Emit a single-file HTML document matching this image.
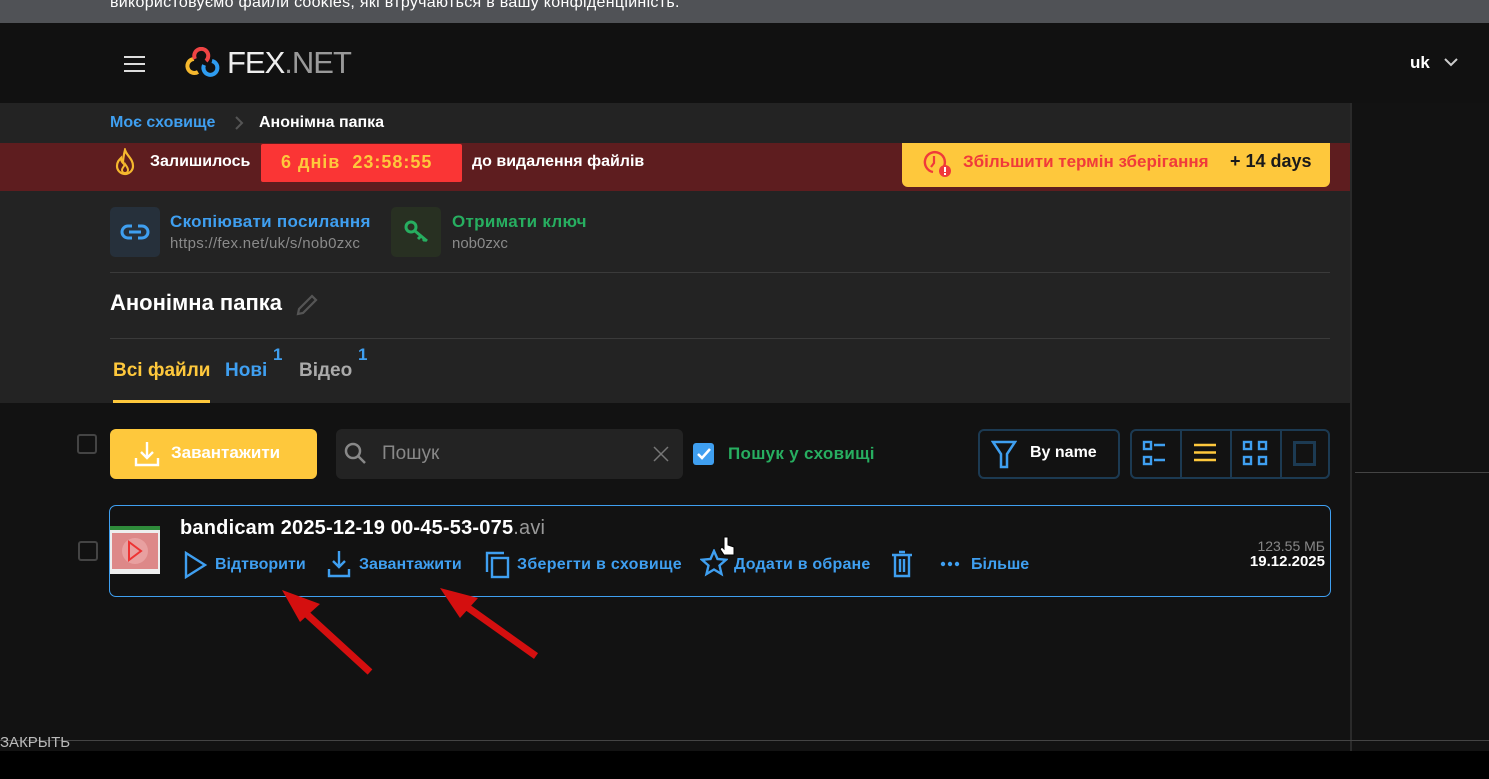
<!DOCTYPE html>
<html><head><meta charset="utf-8"><style>
*{margin:0;padding:0;box-sizing:border-box}
body{width:1489px;height:779px;overflow:hidden;background:#121212;font-family:"Liberation Sans","Noto Sans CJK SC",sans-serif;position:relative;color:#fff}
.a{position:absolute}
.b{font-weight:bold}
</style></head><body>
<div class="a" style="left:0;top:0;width:1489px;height:23px;background:#505256"></div>
<div class="a" style="left:110px;top:-6px;font-size:16px;color:#fff;white-space:nowrap;letter-spacing:0.3px">використовуємо файли cookies, які втручаються в вашу конфіденційність.</div>
<div class="a" style="left:0;top:23px;width:1489px;height:80px;background:#111"></div>
<div class="a" style="left:124px;top:56px;width:21px;height:2px;background:#ddd"></div>
<div class="a" style="left:124px;top:63px;width:21px;height:2px;background:#ddd"></div>
<div class="a" style="left:124px;top:70px;width:21px;height:2px;background:#ddd"></div>
<svg class="a" style="left:184px;top:47px" width="40" height="32" viewBox="0 0 40 32">
<path d="M10 12 A7 7 0 1 0 14 25" stroke="#f5b82e" stroke-width="4" fill="none"/>
<path d="M11 12 A7 7 0 1 1 22 14" stroke="#ef4444" stroke-width="4" fill="none"/>
<path d="M20 18 A7 7 0 1 0 28 14" stroke="#2e9cf0" stroke-width="4" fill="none"/>
</svg>
<div class="a" style="left:227px;top:45px;font-size:31px;color:#eee;letter-spacing:-1px">FEX<span style="color:#999">.NET</span></div>
<div class="a b" style="left:1410px;top:53px;font-size:17px">uk</div>
<svg class="a" style="left:1443px;top:56px" width="16" height="12"><path d="M2 3l6 6 6-6" stroke="#ccc" stroke-width="2" fill="none"/></svg>

<div class="a" style="left:0;top:103px;width:1350px;height:300px;background:#232323"></div>
<div class="a" style="left:1350px;top:103px;width:2px;height:676px;background:#2a2a2a"></div>
<div class="a" style="left:1352px;top:103px;width:137px;height:637px;background:#121212"></div>
<div class="a" style="left:1355px;top:472px;width:134px;height:1px;background:#444"></div>
<div class="a b" style="left:110px;top:114px;font-size:16px;color:#3f9ff0">Моє сховище</div>
<svg class="a" style="left:233px;top:115px" width="12" height="16"><path d="M3 2l6 6-6 6" stroke="#555" stroke-width="2" fill="none"/></svg>
<div class="a b" style="left:259px;top:114px;font-size:16px">Анонімна папка</div>

<div class="a" style="left:0;top:143px;width:1350px;height:48px;background:#5e1d1f"></div>
<svg class="a" style="left:114px;top:148px" width="22" height="30" viewBox="0 0 22 30"><path d="M11 2c2 6 8 9 8 16a8 8 0 0 1-16 0c0-4 2-6 4-8 0 3 1 4 2 5 0-5 1-9 2-13z" stroke="#f5b82e" stroke-width="2.2" fill="none"/><path d="M11 16c2 3 3 4 3 6a3 3 0 0 1-6 0c0-2 2-3 3-6z" stroke="#f5b82e" stroke-width="2" fill="none"/></svg>
<div class="a b" style="left:150px;top:153px;font-size:16px">Залишилось</div>
<div class="a b" style="left:261px;top:144px;width:201px;height:38px;background:#fa3535;border-radius:2px;color:#fec83c;font-size:18px;line-height:36px;padding-left:20px;white-space:pre;letter-spacing:1px">6 днів  23:58:55</div>
<div class="a b" style="left:472px;top:153px;font-size:16px">до видалення файлів</div>
<div class="a" style="left:902px;top:143px;width:428px;height:44px;background:#fec83c;border-radius:0 0 6px 6px"></div>
<svg class="a" style="left:921px;top:148px" width="34" height="32" viewBox="0 0 34 32"><path d="M22 20A10 10 0 1 0 12 24" stroke="#f03a3a" stroke-width="2.4" fill="none"/><path d="M13 8v7l-3 4" stroke="#f03a3a" stroke-width="2.2" fill="none"/><circle cx="24" cy="23" r="6" fill="#f03a3a"/><rect x="23" y="19" width="2" height="5" fill="#fff"/><rect x="23" y="25" width="2" height="2" fill="#fff"/></svg>
<div class="a b" style="left:963px;top:152px;font-size:17px;color:#f03a3a">Збільшити термін зберігання</div>
<div class="a b" style="left:1230px;top:151px;font-size:18px;color:#1a1a1a">+ 14 days</div>

<div class="a" style="left:110px;top:207px;width:50px;height:50px;background:#26303b;border-radius:5px"></div>
<svg class="a" style="left:120px;top:220px" width="30" height="24" viewBox="0 0 30 24"><path d="M12 6H8a6 6 0 0 0 0 12h4M18 6h4a6 6 0 0 1 0 12h-4M9 12h12" stroke="#3f9ff0" stroke-width="3" fill="none"/></svg>
<div class="a b" style="left:170px;top:212px;font-size:17px;color:#3f9ff0;letter-spacing:0.3px">Скопіювати посилання</div>
<div class="a" style="left:170px;top:235px;font-size:15px;color:#8a8a8a;letter-spacing:0.3px">https://fex.net/uk/s/nob0zxc</div>
<div class="a" style="left:391px;top:207px;width:50px;height:50px;background:#283022;border-radius:5px"></div>
<svg class="a" style="left:402px;top:218px" width="30" height="28" viewBox="0 0 30 28"><circle cx="9" cy="9" r="5" stroke="#27ae60" stroke-width="3" fill="none"/><path d="M13 13l12 10M19 18l-3 3M23 21l-2 2" stroke="#27ae60" stroke-width="3" fill="none"/></svg>
<div class="a b" style="left:452px;top:212px;font-size:17px;color:#27ae60;letter-spacing:0.3px">Отримати ключ</div>
<div class="a" style="left:452px;top:235px;font-size:15px;color:#8a8a8a">nob0zxc</div>
<div class="a" style="left:110px;top:272px;width:1220px;height:1px;background:#3a3a3a"></div>
<div class="a b" style="left:110px;top:290px;font-size:22px">Анонімна папка</div>
<svg class="a" style="left:294px;top:292px" width="26" height="26" viewBox="0 0 26 26"><path d="M4 22l1-5L18 4l4 4L9 21z" stroke="#555" stroke-width="2.2" fill="none"/></svg>
<div class="a" style="left:110px;top:338px;width:1220px;height:1px;background:#3a3a3a"></div>
<div class="a b" style="left:113px;top:360px;font-size:19px;color:#fec83c">Всі файли</div>
<div class="a" style="left:113px;top:400px;width:97px;height:3px;background:#fec83c"></div>
<div class="a b" style="left:225px;top:360px;font-size:19px;color:#3f9ff0">Нові</div>
<div class="a b" style="left:273px;top:345px;font-size:17px;color:#3f9ff0">1</div>
<div class="a b" style="left:299px;top:360px;font-size:19px;color:#aaa">Відео</div>
<div class="a b" style="left:358px;top:345px;font-size:17px;color:#3f9ff0">1</div>

<div class="a" style="left:77px;top:434px;width:20px;height:20px;border:2px solid #444;border-radius:3px"></div>
<div class="a" style="left:110px;top:429px;width:207px;height:50px;background:#fec83c;border-radius:6px"></div>
<svg class="a" style="left:133px;top:440px" width="28" height="28" viewBox="0 0 28 28"><path d="M14 2v16M8 12l6 6 6-6M3 18v7h22v-7" stroke="#fff" stroke-width="2.4" fill="none"/></svg>
<div class="a b" style="left:171px;top:443px;font-size:17px">Завантажити</div>
<div class="a" style="left:336px;top:429px;width:347px;height:50px;background:#232323;border-radius:6px"></div>
<svg class="a" style="left:343px;top:441px" width="26" height="26" viewBox="0 0 26 26"><circle cx="10" cy="10" r="7" stroke="#888" stroke-width="2.5" fill="none"/><path d="M15 15l7 7" stroke="#888" stroke-width="2.5"/></svg>
<div class="a" style="left:382px;top:443px;font-size:19px;color:#888">Пошук</div>
<svg class="a" style="left:652px;top:445px" width="18" height="18"><path d="M2 2l14 14M16 2L2 16" stroke="#777" stroke-width="1.5"/></svg>
<div class="a" style="left:693px;top:443px;width:21px;height:22px;background:#3f9ff0;border-radius:3px"></div>
<svg class="a" style="left:693px;top:443px" width="21" height="22"><path d="M5 11l4 4 8-9" stroke="#fff" stroke-width="2.5" fill="none"/></svg>
<div class="a b" style="left:728px;top:444px;font-size:17px;color:#27ae60;letter-spacing:0.3px">Пошук у сховищі</div>
<div class="a" style="left:978px;top:429px;width:142px;height:50px;border:2px solid #1c3a52;border-radius:6px"></div>
<svg class="a" style="left:991px;top:440px" width="26" height="30" viewBox="0 0 26 30"><path d="M2 2h22l-8 12v13h-6V14z" stroke="#3f9ff0" stroke-width="2.5" fill="none"/></svg>
<div class="a b" style="left:1030px;top:444px;font-size:16px">By name</div>
<div class="a" style="left:1130px;top:429px;width:200px;height:50px;border:2px solid #1c3a52;border-radius:6px"></div>
<div class="a" style="left:1180px;top:431px;width:2px;height:46px;background:#1c3a52"></div>
<div class="a" style="left:1230px;top:431px;width:2px;height:46px;background:#1c3a52"></div>
<div class="a" style="left:1280px;top:431px;width:2px;height:46px;background:#1c3a52"></div>
<svg class="a" style="left:1142px;top:440px" width="30" height="30"><rect x="2" y="2" width="7" height="7" stroke="#3f9ff0" stroke-width="2.4" fill="none"/><rect x="2" y="17" width="7" height="7" stroke="#3f9ff0" stroke-width="2.4" fill="none"/><path d="M12 5h11M12 20h11" stroke="#3f9ff0" stroke-width="2.4"/></svg>
<svg class="a" style="left:1192px;top:440px" width="30" height="30"><path d="M2 5h22M2 12.5h22M2 20h22" stroke="#fec83c" stroke-width="2.4"/></svg>
<svg class="a" style="left:1242px;top:440px" width="30" height="30"><rect x="2" y="2" width="7" height="7" stroke="#3f9ff0" stroke-width="2.4" fill="none"/><rect x="17" y="2" width="7" height="7" stroke="#3f9ff0" stroke-width="2.4" fill="none"/><rect x="2" y="17" width="7" height="7" stroke="#3f9ff0" stroke-width="2.4" fill="none"/><rect x="17" y="17" width="7" height="7" stroke="#3f9ff0" stroke-width="2.4" fill="none"/></svg>
<div class="a" style="left:1293px;top:441px;width:23px;height:25px;border:3px solid #1c3a52"></div>

<div class="a" style="left:78px;top:541px;width:20px;height:20px;border:2px solid #444;border-radius:3px"></div>
<div class="a" style="left:109px;top:505px;width:1222px;height:92px;border:1.5px solid #3f9ff0;border-radius:7px"></div>
<div class="a" style="left:110px;top:526px;width:50px;height:48px;background:#eee"></div>
<div class="a" style="left:110px;top:526px;width:50px;height:4px;background:#2e8b3a"></div>
<div class="a" style="left:112px;top:533px;width:46px;height:36px;background:#d88"></div>
<svg class="a" style="left:120px;top:536px" width="30" height="30"><circle cx="15" cy="15" r="13" fill="#e8a0a0"/><path d="M9 6l12 9-12 9z" stroke="#e33" stroke-width="2" fill="none"/></svg>
<div class="a b" style="left:180px;top:517px;font-size:20px;letter-spacing:0.2px">bandicam 2025-12-19 00-45-53-075<span style="color:#999;font-weight:normal">.avi</span></div>
<svg class="a" style="left:183px;top:551px" width="26" height="28"><path d="M3 2l19 12L3 26z" stroke="#3f9ff0" stroke-width="2.4" fill="none"/></svg>
<div class="a b" style="left:215px;top:556px;font-size:16px;color:#3f9ff0">Відтворити</div>
<svg class="a" style="left:326px;top:549px" width="26" height="30"><path d="M13 2v16M7 12l6 6 6-6M3 20v7h20v-7" stroke="#3f9ff0" stroke-width="2.4" fill="none"/></svg>
<div class="a b" style="left:359px;top:556px;font-size:16px;color:#3f9ff0">Завантажити</div>
<svg class="a" style="left:484px;top:550px" width="28" height="30"><path d="M3 22V3h17" stroke="#3f9ff0" stroke-width="2.4" fill="none"/><rect x="8" y="8" width="16" height="19" stroke="#3f9ff0" stroke-width="2.4" fill="none"/></svg>
<div class="a b" style="left:517px;top:556px;font-size:16px;color:#3f9ff0;letter-spacing:0.3px">Зберегти в сховище</div>
<svg class="a" style="left:700px;top:549px" width="28" height="28" viewBox="0 0 28 28"><path d="M14 2l3.5 8 8.5.8-6.5 5.7 2 8.5-7.5-4.5-7.5 4.5 2-8.5L2 10.8l8.5-.8z" stroke="#3f9ff0" stroke-width="2.4" fill="none"/></svg>
<div class="a b" style="left:734px;top:556px;font-size:16px;color:#3f9ff0;letter-spacing:0.2px">Додати в обране</div>
<svg class="a" style="left:890px;top:550px" width="26" height="28"><path d="M2 5h20M9 2h6M5 5v21h14V5M10 9v13M14 9v13" stroke="#3f9ff0" stroke-width="2.4" fill="none"/></svg>
<svg class="a" style="left:940px;top:559px" width="24" height="10"><circle cx="3" cy="5" r="2.2" fill="#3f9ff0"/><circle cx="10" cy="5" r="2.2" fill="#3f9ff0"/><circle cx="17" cy="5" r="2.2" fill="#3f9ff0"/></svg>
<div class="a b" style="left:971px;top:556px;font-size:16px;color:#3f9ff0">Більше</div>
<div class="a" style="left:1200px;top:538px;width:125px;text-align:right;font-size:14px;color:#888">123.55 МБ</div>
<div class="a b" style="left:1200px;top:553px;width:125px;text-align:right;font-size:15px">19.12.2025</div>
<svg class="a" style="left:718px;top:535px" width="20" height="24"><path d="M6 2v12l-2-2-2 2 4 6h10v-8l-6-2V2z" fill="#fff" stroke="#000"/></svg>

<svg class="a" style="left:270px;top:580px" width="290" height="100">
<path d="M100 92L30 28" stroke="#d40f0f" stroke-width="7"/><path d="M12 10l38 14-20 18z" fill="#d40f0f"/>
<path d="M266 76L190 22" stroke="#d40f0f" stroke-width="7"/><path d="M170 8l38 10-18 20z" fill="#d40f0f"/>
</svg>

<div class="a" style="left:0;top:740px;width:1489px;height:1px;background:#444"></div>
<div class="a" style="left:0;top:734px;font-size:15px;color:#bbb">ЗАКРЫТЬ</div>
<div class="a" style="left:0;top:751px;width:1489px;height:28px;background:#000"></div>
</body></html>
